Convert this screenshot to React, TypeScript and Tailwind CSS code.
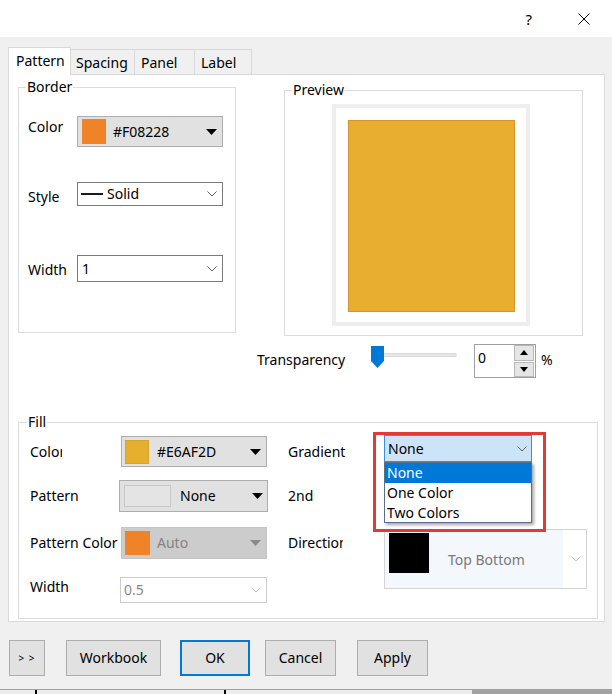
import React from "react";

const Tri = ({ color = "#000" }: { color?: string }) => (
  <svg width="11" height="6" viewBox="0 0 11 6" className="shrink-0">
    <path d="M0 0H11L5.5 6Z" fill={color} />
  </svg>
);

const Chev = ({ color = "#5f5f5f" }: { color?: string }) => (
  <svg width="10" height="6" viewBox="0 0 10 6" className="shrink-0">
    <path d="M0.5 0.5L5 5L9.5 0.5" fill="none" stroke={color} strokeWidth="1" />
  </svg>
);

const SmallTri = ({ up }: { up?: boolean }) => (
  <svg width="8" height="5" viewBox="0 0 8 5">
    <path d={up ? "M0 5H8L4 0Z" : "M0 0H8L4 5Z"} fill="#000" />
  </svg>
);

function Group({
  legend,
  legendClass,
  className,
  children,
}: {
  legend: string;
  legendClass: string;
  className: string;
  children?: React.ReactNode;
}) {
  return (
    <div className={"border border-[#dcdcdc] flex flex-col shrink-0 " + className}>
      <div className={"-mt-[11px] px-[1px] bg-white w-fit leading-[20px] " + legendClass}>{legend}</div>
      {children}
    </div>
  );
}

function Btn({ className, children }: { className: string; children: React.ReactNode }) {
  return (
    <div className={"h-[36px] bg-[#e1e1e1] flex items-center justify-center shrink-0 " + className}>
      {children}
    </div>
  );
}

export default function App() {
  return (
    <div className="w-[612px] h-[694px] overflow-hidden bg-[#f0f0f0] flex flex-col text-[14px] leading-[20px] text-black font-['Noto_Sans',sans-serif]">
      {/* Title bar */}
      <div className="h-[37px] bg-white flex items-center justify-end shrink-0">
        <span className="text-[15px] leading-[20px] mr-[46px]">?</span>
        <svg width="12" height="12" viewBox="0 0 12 12" className="mr-[22px]">
          <path d="M0.5 0.5L11.5 11.5M11.5 0.5L0.5 11.5" stroke="#000" strokeWidth="1" />
        </svg>
      </div>

      {/* Tabs */}
      <div className="mt-[10px] h-[27px] flex items-end pl-[8px] shrink-0">
        <div className="relative z-10 -mb-px h-[28px] w-[63px] bg-white border border-b-0 border-[#d9d9d9] pl-[7px] pt-[3px]">
          Pattern
        </div>
        <div className="h-[25px] w-[64px] border-t border-r border-[#d9d9d9] pl-[5px] pt-[3px]">Spacing</div>
        <div className="h-[25px] w-[60px] border-t border-r border-[#d9d9d9] pl-[6px] pt-[3px]">Panel</div>
        <div className="h-[25px] w-[57px] border-t border-r border-[#d9d9d9] pl-[6px] pt-[3px]">Label</div>
      </div>

      {/* Tab panel */}
      <div className="ml-[8px] w-[597px] h-[548px] border border-[#d9d9d9] bg-white flex flex-col shrink-0">
        <div className="flex items-start pl-[9px]">
          {/* Border group */}
          <Group legend="Border" legendClass="ml-[7px]" className="mt-[12px] w-[218px] h-[246px]">
            <div className="flex items-start pl-[9px] mt-[19px]">
              <span className="w-[49px] mt-[1px]">Color</span>
              <div className="w-[146px] h-[31px] bg-[#e1e1e1] border border-[#adadad] flex items-center pl-[4px] pr-[5px]">
                <div className="w-[24px] h-[25px] bg-[#F08228]" />
                <span className="ml-[7px] flex-1">#F08228</span>
                <Tri />
              </div>
            </div>
            <div className="flex items-start pl-[9px] mt-[35px]">
              <span className="w-[49px] mt-[5px]">Style</span>
              <div className="w-[146px] h-[24px] bg-white border border-[#7a7a7a] flex items-center pl-[3px] pr-[5px]">
                <div className="w-[22px] h-[2px] bg-[#1a1a1a]" />
                <span className="ml-[4px] flex-1">Solid</span>
                <Chev />
              </div>
            </div>
            <div className="flex items-start pl-[9px] mt-[48px]">
              <span className="w-[49px] mt-[5px]">Width</span>
              <div className="w-[146px] h-[27px] bg-white border border-[#7a7a7a] flex items-center pl-[4px] pr-[5px]">
                <span className="flex-1">1</span>
                <Chev />
              </div>
            </div>
          </Group>

          {/* Right column */}
          <div className="ml-[21px] mt-[15px] flex flex-col">
            <Group legend="Preview" legendClass="ml-[7px]" className="ml-[27px] w-[299px] h-[246px]">
              <div className="ml-[47px] mt-[4px] w-[198px] h-[222px] border-[4px] border-[#eeeeee] bg-white pl-[12px] pt-[12px]">
                <div className="w-[167px] h-[192px] bg-[#E8AE2F] border border-[#de922c]" />
              </div>
            </Group>
            <div className="mt-[8px] h-[34px] flex items-start">
              <span className="w-[114px] mt-[6px]">Transparency</span>
              <svg width="86" height="24" viewBox="0 0 86 24" className="mt-[1px] shrink-0">
                <rect x="6" y="8.5" width="79" height="3" fill="#e7e7e7" stroke="#d9d9d9" strokeWidth="1" />
                <path d="M0 1H13V16L6.5 23L0 16Z" fill="#0078d7" />
              </svg>
              <div className="ml-[17px] w-[62px] h-[34px] border border-[#a0a0a0] bg-white flex">
                <span className="flex-1 pl-[3px] pt-[3px]">0</span>
                <div className="w-[20px] flex flex-col gap-[1px] mr-[1px]">
                  <div className="h-[16px] bg-[#e5e5e5] border border-[#b9b9b9] flex items-center justify-center">
                    <SmallTri up />
                  </div>
                  <div className="h-[16px] bg-[#e5e5e5] border border-[#b9b9b9] flex items-center justify-center">
                    <SmallTri />
                  </div>
                </div>
              </div>
              <span className="ml-[5px] mt-[6px]">%</span>
            </div>
          </div>
        </div>

        {/* Fill group */}
        <Group legend="Fill" legendClass="ml-[8px]" className="ml-[9px] mt-[44px] w-[580px] h-[197px]">
          <div className="flex items-start">
            {/* Left column */}
            <div className="w-[269px] pl-[11px] flex flex-col shrink-0">
              <div className="mt-[4px] h-[31px] flex items-center">
                <div className="w-[89px] shrink-0">
                  <span className="block w-[32px] overflow-hidden whitespace-nowrap">Color</span>
                </div>
                <div className="ml-[2px] w-[146px] h-[31px] bg-[#e1e1e1] border border-[#adadad] flex items-center pl-[3px] pr-[5px]">
                  <div className="w-[24px] h-[24px] bg-[#E6AF2D] border border-[#d9a22a]" />
                  <span className="ml-[8px] flex-1">#E6AF2D</span>
                  <Tri />
                </div>
              </div>
              <div className="mt-[13px] h-[32px] flex items-center">
                <span className="w-[89px] shrink-0">Pattern</span>
                <div className="w-[149px] h-[32px] bg-[#e1e1e1] border border-[#adadad] flex items-center pl-[4px] pr-[4px]">
                  <div className="w-[47px] h-[22px] bg-[#e4e4e4] border border-[#c8c8c8]" />
                  <span className="ml-[9px] flex-1">None</span>
                  <Tri />
                </div>
              </div>
              <div className="mt-[15px] h-[32px] flex items-center">
                <span className="w-[89px] shrink-0 whitespace-nowrap">Pattern Color</span>
                <div className="ml-[2px] w-[146px] h-[32px] bg-[#cccccc] border border-[#c4c4c4] flex items-center pl-[3px] pr-[5px]">
                  <div className="w-[25px] h-[24px] bg-[#F08228]" />
                  <span className="ml-[7px] flex-1 text-[#838383]">Auto</span>
                  <Tri color="#8a8a8a" />
                </div>
              </div>
              <div className="mt-[18px] flex items-start">
                <span className="w-[89px] shrink-0">Width</span>
                <div className="ml-[1px] w-[147px] h-[26px] bg-white border border-[#cccccc] flex items-center pl-[3px] pr-[5px]">
                  <span className="flex-1 text-[#8a8a8a]">0.5</span>
                  <Chev color="#c4c4c4" />
                </div>
              </div>
            </div>

            {/* Right column */}
            <div className="flex flex-col">
              <div className="mt-[3px] flex items-start">
                <span className="w-[96px] mt-[7px] shrink-0">Gradient</span>
                <div className="relative w-[148px] h-[27px]">
                  <div className="w-[148px] h-[27px] bg-[#cce4f7] border border-[#3d8ee0] flex items-center pl-[3px] pr-[4px]">
                    <span className="flex-1">None</span>
                    <Chev color="#606060" />
                  </div>
                  <div className="absolute z-20 left-0 top-[27px] w-[148px] h-[61px] bg-white border border-[#5a6e86] shadow-[2px_2px_3px_rgba(0,0,0,0.35)] flex flex-col">
                    <div className="h-[20px] bg-[#0078d7] text-white pl-[2px]">None</div>
                    <div className="h-[20px] pl-[2px]">One Color</div>
                    <div className="h-[19px] pl-[2px]">Two Colors</div>
                  </div>
                  <div className="absolute z-30 -left-[11px] -top-[3px] w-[173px] h-[100px] border-[3px] border-[#e53935] pointer-events-none" />
                </div>
              </div>
              <div className="mt-[18px] h-[32px] flex items-center">
                <span>2nd</span>
              </div>
              <div className="mt-[17px] flex items-start">
                <div className="w-[96px] mt-[4px] shrink-0">
                  <span className="block w-[55px] overflow-hidden whitespace-nowrap">Direction</span>
                </div>
                <div className="w-[203px] h-[60px] border border-[#d4d4d4] bg-white flex">
                  <div className="w-[178px] h-full bg-[#f4f7fc] flex items-start pl-[4px] pt-[3px]">
                    <div className="w-[40px] h-[40px] bg-black shrink-0" />
                    <span className="ml-[19px] mt-[17px] text-[#7a7a7a] whitespace-nowrap">Top Bottom</span>
                  </div>
                  <div className="flex-1 flex items-center justify-center pl-[3px]">
                    <Chev color="#c4c4c4" />
                  </div>
                </div>
              </div>
            </div>
          </div>
        </Group>
      </div>

      {/* Buttons */}
      <div className="mt-[18px] flex items-start pl-[9px] h-[36px] shrink-0">
        <Btn className="w-[36px] border border-[#adadad] text-[10px] tracking-[1px]">&gt; &gt;</Btn>
        <Btn className="ml-[21px] w-[95px] border border-[#adadad]">Workbook</Btn>
        <Btn className="ml-[19px] w-[70px] border-2 border-[#0078d7]">OK</Btn>
        <Btn className="ml-[15px] w-[71px] border border-[#adadad]">Cancel</Btn>
        <Btn className="ml-[21px] w-[71px] border border-[#adadad]">Apply</Btn>
      </div>

      {/* Bottom strip */}
      <div className="mt-[13px] h-[1px] bg-[#6aaee8] shrink-0" />
      <div className="h-[4px] flex shrink-0">
        <div className="w-[35px] bg-[#ececec]" />
        <div className="w-[2px] bg-black" />
        <div className="w-[187px] bg-[#ececec]" />
        <div className="w-[2px] bg-black" />
        <div className="w-[246px] bg-[#ececec]" />
        <div className="flex-1 bg-[#a2a2a2]" />
      </div>
    </div>
  );
}
